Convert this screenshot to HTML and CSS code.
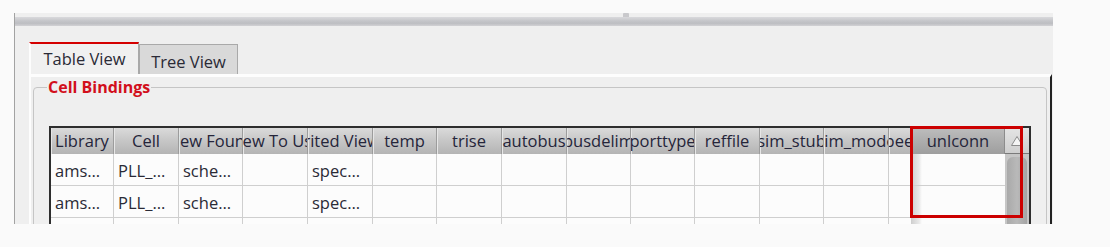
FILE: index.html
```html
<!DOCTYPE html>
<html lang="en">
<head>
  <meta charset="UTF-8">
  <title>Hierarchy Editor - Cell Bindings</title>
  <link rel="stylesheet" href="styles.css">
</head>
<body>
  <div class="window">
    <div class="splitter"><span class="handle"></span></div>

    <div class="tabs">
      <div class="tab active">Table View</div>
      <div class="tab">Tree View</div>
    </div>

    <div class="pane">
      <div class="groupbox">
        <span class="legend">Cell Bindings</span>

        <div class="tablewrap">
          <div class="grid">
            <div class="row head">
              <div class="th"><span>Library</span></div>
              <div class="th"><span>Cell</span></div>
              <div class="th"><span>View Found</span></div>
              <div class="th"><span>View To Use</span></div>
              <div class="th"><span>Inherited View List</span></div>
              <div class="th"><span>temp</span></div>
              <div class="th"><span>trise</span></div>
              <div class="th"><span>autobus</span></div>
              <div class="th"><span>busdelim</span></div>
              <div class="th"><span>porttype</span></div>
              <div class="th"><span>reffile</span></div>
              <div class="th"><span>sim_stub</span></div>
              <div class="th"><span>sim_mode</span></div>
              <div class="th"><span>speed</span></div>
              <div class="th drag"><span>unlconn</span></div>
            </div>
            <div class="row">
              <div class="td">ams…</div>
              <div class="td">PLL_…</div>
              <div class="td">sche…</div>
              <div class="td"></div>
              <div class="td">spec…</div>
              <div class="td"></div>
              <div class="td"></div>
              <div class="td"></div>
              <div class="td"></div>
              <div class="td"></div>
              <div class="td"></div>
              <div class="td"></div>
              <div class="td"></div>
              <div class="td"></div>
              <div class="td drag"></div>
            </div>
            <div class="row">
              <div class="td">ams…</div>
              <div class="td">PLL_…</div>
              <div class="td">sche…</div>
              <div class="td"></div>
              <div class="td">spec…</div>
              <div class="td"></div>
              <div class="td"></div>
              <div class="td"></div>
              <div class="td"></div>
              <div class="td"></div>
              <div class="td"></div>
              <div class="td"></div>
              <div class="td"></div>
              <div class="td"></div>
              <div class="td drag"></div>
            </div>
            <div class="row">
              <div class="td"></div>
              <div class="td"></div>
              <div class="td"></div>
              <div class="td"></div>
              <div class="td"></div>
              <div class="td"></div>
              <div class="td"></div>
              <div class="td"></div>
              <div class="td"></div>
              <div class="td"></div>
              <div class="td"></div>
              <div class="td"></div>
              <div class="td"></div>
              <div class="td"></div>
              <div class="td drag"></div>
            </div>
          </div>

          <div class="vscroll">
            <div class="up">
              <svg width="14" height="12" viewBox="0 0 14 12">
                <path d="M7 1.5 L12.5 10.5 H1.5 Z" fill="#f4f4f4" stroke="#8c8c8c" stroke-width="1"/>
              </svg>
            </div>
            <div class="track"><div class="thumb"></div></div>
          </div>

          <div class="mark"></div>
        </div>
      </div>
    </div>
  </div>
</body>
</html>
```

FILE: styles.css
```css
html,
body {
  margin: 0;
  padding: 0;
}
body {
  background: #fafafa;
  font: 16.5px/1.2 "Open Sans", "Noto Sans", sans-serif;
  color: #2a2a36;
}
.window {
  position: relative;
  margin: 13px 0 0 14px;
  width: 1039px;
  height: 211px;
  box-sizing: border-box;
  border-left: 1px solid #a2a2a2;
  background: #efefef;
  overflow: hidden;
}
.splitter {
  position: relative;
  margin-top: 4px;
  height: 9px;
  background: linear-gradient(#d9d9dc, #c4c5c9 45%, #bdbec2 70%, #d2d2d5);
}
.handle {
  position: absolute;
  left: 608px;
  top: -4px;
  width: 6px;
  height: 4px;
  background: #c9c9cc;
  border-radius: 1px 1px 0 0;
}

/* tabs */
.tabs {
  display: flex;
  align-items: flex-end;
  margin-top: 16px;
  padding-left: 14px;
  height: 32px;
}
.tab {
  box-sizing: border-box;
  width: 99px;
  height: 30px;
  padding-top: 7px;
  text-align: center;
  background: #d9d9d9;
  border: 1px solid #a9a9a9;
  border-bottom: 0;
  color: #2a2a36;
}
.tab.active {
  width: 110px;
  height: 32px;
  padding-top: 5px;
  background: #f0f0f0;
  border-top: 2px solid #d40000;
  border-left: 2px solid #fdfdfd;
  border-right: 1px solid #a9a9a9;
}

/* pane */
.pane {
  margin-left: 14px;
  width: 1023px;
  height: 150px;
  box-sizing: border-box;
  border-top: 3px solid #fdfdfd;
  border-left: 2px solid #fdfdfd;
  border-right: 2px solid #222;
}
.groupbox {
  position: relative;
  margin: 10px 0 0 2px;
  width: 1014px;
  height: 200px;
  box-sizing: border-box;
  border: 1px solid #c5c5c5;
  border-radius: 4px;
}
.legend {
  position: absolute;
  left: 13px;
  top: -10px;
  padding: 0 1px;
  background: #efefef;
  color: #d20f1c;
  font-weight: bold;
  font-size: 16px;
}

/* table */
.tablewrap {
  position: relative;
  display: flex;
  margin: 38px 0 0 15px;
  width: 982px;
  box-sizing: border-box;
  border: 2px solid #2e2e2e;
  border-bottom: 0;
  background: #fcfcfc;
}
.grid {
  width: 954px;
}
.row {
  display: grid;
  grid-template-columns: 63px 65px 64px 65px 65px 64px 65px 65px 64px 64px 65px 64px 65px 23px 93px;
  height: 32px;
}
.row.head {
  height: 26px;
}
.th {
  display: flex;
  justify-content: center;
  align-items: center;
  overflow: hidden;
  white-space: nowrap;
  background: linear-gradient(#dadada, #c6c6c6 50%, #b4b4b4);
  border-right: 1px solid #9c9c9c;
  box-shadow: inset 1px 0 #e6e6e6;
  color: #25253a;
}
.th.drag {
  background: linear-gradient(#bdbdbd, #adadad 50%, #9e9e9e);
  border-right: 1px solid #8c8c8c;
  box-shadow: none;
}
.td {
  box-sizing: border-box;
  padding: 1px 4px 0;
  line-height: 31px;
  overflow: hidden;
  white-space: nowrap;
  border-right: 1px solid #cfcfcf;
  border-bottom: 1px solid #cfcfcf;
  color: #2a2a36;
}
.td.drag {
  background: linear-gradient(90deg, #d2d2d2, #e9e9e9 7px, #fcfcfc 10px);
  border-right: 0;
}

/* scrollbar */
.vscroll {
  width: 24px;
  background: #c6c6c6;
}
.up {
  display: flex;
  justify-content: center;
  align-items: center;
  height: 26px;
  box-sizing: border-box;
  background: linear-gradient(#e4e4e4, #cfcfcf);
  border-bottom: 1px solid #7a7a7a;
}
.track {
  padding: 3px 2px 0;
}
.thumb {
  height: 120px;
  border-radius: 6px;
  background: linear-gradient(90deg, #a9a9a9, #b9b9b9 50%, #a4a4a4);
}

/* highlight marker */
.mark {
  position: absolute;
  left: 859px;
  top: -2px;
  width: 113px;
  height: 92px;
  box-sizing: border-box;
  border: 3px solid #cc0000;
}
```
